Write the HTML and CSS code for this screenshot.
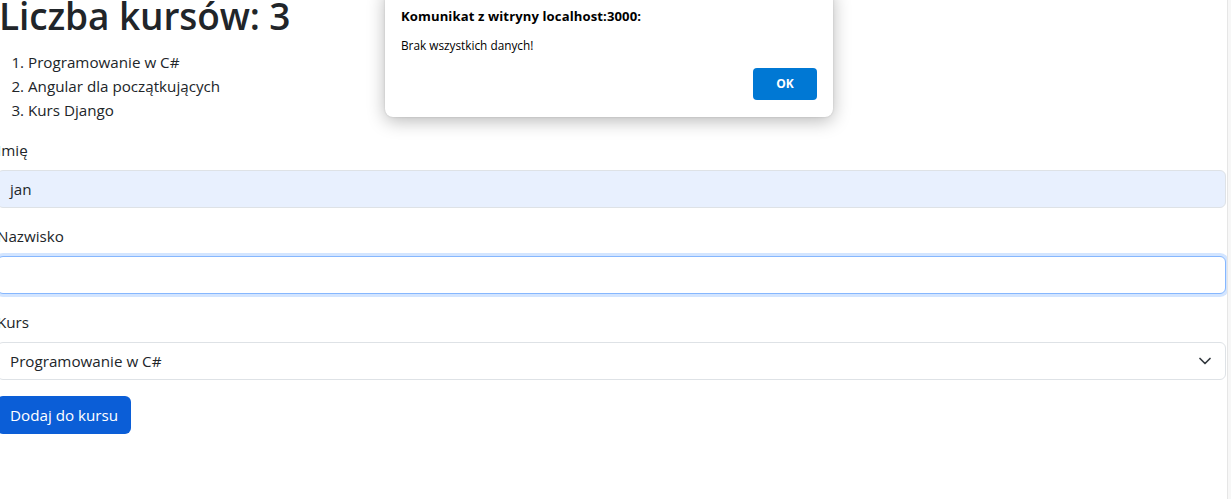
FILE: index.html
```html
<!DOCTYPE html>
<html lang="pl">
<head>
<meta charset="utf-8">
<title>Kursy</title>
<link rel="stylesheet" href="styles.css">
</head>
<body>
<div class="page">
  <main class="container">
    <h1 class="title">Liczba kursów: 3</h1>
    <ol class="courses">
      <li>Programowanie w C#</li>
      <li>Angular dla początkujących</li>
      <li>Kurs Django</li>
    </ol>
    <form class="form">
      <div class="field">
        <label class="label">Imię</label>
        <div class="control control-autofill">jan</div>
      </div>
      <div class="field">
        <label class="label">Nazwisko</label>
        <div class="control control-focus"></div>
      </div>
      <div class="field">
        <label class="label">Kurs</label>
        <div class="control control-select">
          <span>Programowanie w C#</span>
          <svg class="chevron" width="12" height="8" viewBox="0 0 12 8"><path d="M1 1.5l5 5 5-5" fill="none" stroke="#343a40" stroke-width="1.7" stroke-linecap="round" stroke-linejoin="round"/></svg>
        </div>
      </div>
      <div class="btn">Dodaj do kursu</div>
    </form>
  </main>
  <div class="scrollbar"></div>
</div>
<div class="dialog">
  <div class="dialog-title">Komunikat z witryny localhost:3000:</div>
  <div class="dialog-msg">Brak wszystkich danych!</div>
  <div class="dialog-actions"><div class="dialog-ok">OK</div></div>
</div>
</body>
</html>
```
FILE: styles.css
```css
html, body {
  margin: 0;
  padding: 0;
  background: #fff;
  overflow: hidden;
}
body {
  width: 1231px;
  height: 499px;
  font-family: "Open Sans", "Noto Sans", sans-serif;
  color: #212529;
  font-size: 15.2px;
  line-height: 24px;
}
.page {
  display: flex;
  height: 499px;
}
.container {
  flex: 1;
  margin-left: -3px;
  margin-right: 1px;
  margin-top: -8px;
}
.title {
  font-size: 37px;
  font-weight: 600;
  line-height: 48px;
  margin: 0 0 10px 0;
  padding-left: 2px;
  letter-spacing: -0.1px;
}
.courses {
  margin: 0 0 16px 0;
  padding-left: 31px;
}
.form {
  display: flex;
  flex-direction: column;
  align-items: flex-start;
}
.field {
  align-self: stretch;
  margin-bottom: 16px;
}
.label {
  display: block;
  margin-bottom: 8px;
}
.control {
  box-sizing: border-box;
  height: 38px;
  border: 1px solid #dee2e6;
  border-radius: 6px;
  padding: 6px 12px;
  background: #fff;
}
.control-autofill {
  background: #e8f0fe;
}
.control-focus {
  border-color: #86b7fe;
  box-shadow: 0 0 0 3px rgba(13, 110, 253, 0.18);
}
.control-select {
  display: flex;
  align-items: center;
  justify-content: space-between;
  padding-right: 14px;
}
.chevron {
  display: block;
}
.btn {
  box-sizing: border-box;
  height: 38px;
  line-height: 24px;
  padding: 7px 13px 7px 13px;
  background: #0b5ed7;
  color: #fff;
  border-radius: 6px;
}
.scrollbar {
  width: 3px;
  background: #f7f7f7;
  border-left: 1px solid #e6e6e6;
}
.dialog {
  position: absolute;
  left: 385px;
  top: -12px;
  width: 448px;
  box-sizing: border-box;
  background: #fff;
  border-radius: 8px;
  box-shadow: 0 4px 18px rgba(0, 0, 0, 0.28), 0 0 2px rgba(0,0,0,0.15);
  padding: 12px 16px 17px 16px;
  font-family: "Open Sans", "Noto Sans", sans-serif;
  color: #000;
}
.dialog-title {
  font-size: 13.1px;
  font-weight: 700;
  line-height: 20px;
  margin-top: 6px;
  letter-spacing: 0.1px;
}
.dialog-msg {
  font-size: 11.8px;
  line-height: 18px;
  margin-top: 10px;
}
.dialog-actions {
  display: flex;
  justify-content: flex-end;
  margin-top: 14px;
}
.dialog-ok {
  width: 64px;
  height: 32px;
  background: #0078d4;
  color: #fff;
  border-radius: 4px;
  font-size: 12px;
  font-weight: 700;
  line-height: 32px;
  text-align: center;
}
```
